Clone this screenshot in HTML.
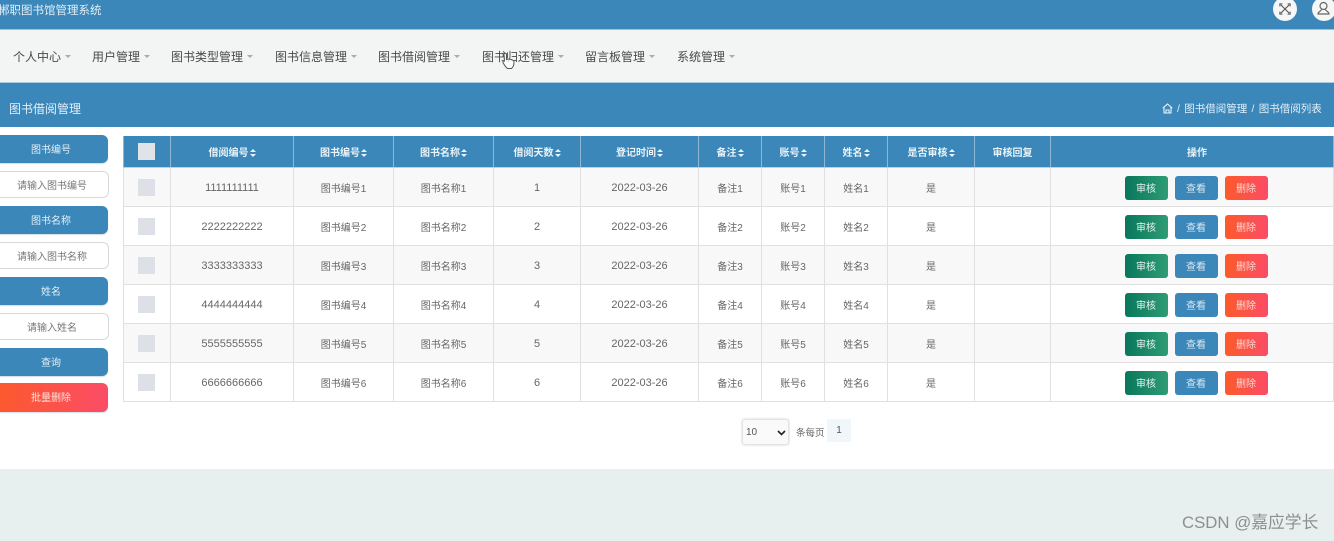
<!DOCTYPE html>
<html><head><meta charset="utf-8">
<style>
html,body{margin:0;padding:0;background:#fff}
#w{position:relative;width:1334px;height:541px;overflow:hidden;background:#fff;font-family:"Liberation Sans","Noto Sans CJK SC",sans-serif;filter:blur(.35px)}
.a{position:absolute}
.n{position:absolute;top:49px;font-size:12px;line-height:16px;color:#4a4a4a;white-space:nowrap}
.n i{display:inline-block;width:0;height:0;border:3.5px solid transparent;border-top:3.5px solid #aaa;border-bottom:0;margin-left:4px;vertical-align:3px}
.sb{position:absolute;left:-6px;width:114px;height:28px;background:#3b87ba;border-radius:6px;color:#e4eff6;font-size:10px;line-height:32px;text-align:center;box-shadow:0 1px 1px #d0dce4}
.si{position:absolute;left:-5px;width:112px;height:25px;background:#fff;border:1.5px solid #d8d8d8;border-radius:6px;color:#777;font-size:10px;line-height:29px;text-align:center}
table{position:absolute;left:123px;top:136px;width:1211px;border-collapse:collapse;table-layout:fixed;font-size:10px;color:#666}
th{height:31px;padding:0;background:#3b87ba;color:#e9f2f7;font-size:10px;font-weight:bold;border:1px solid #8db7d4;border-top:0;border-bottom:1px solid #ccc;white-space:nowrap}
td{height:38px;padding:0;text-align:center;border:1px solid #e0e0e0;white-space:nowrap}
td.num{font-size:11px;padding-top:2px;height:36px}
tr.g td{background:#f8f8f8}
td.op{padding-left:8px}
th.op{padding-left:10px}
.s{display:inline-block;position:relative;width:6px;height:8px;margin-left:1px;vertical-align:-1px}
.s:before,.s:after{content:"";position:absolute;left:0;width:0;height:0;border-left:3px solid transparent;border-right:3px solid transparent}
.s:before{top:0;border-bottom:3.5px solid #e9f2f7}
.s:after{bottom:0;border-top:3.5px solid #e9f2f7}
.c{display:block;width:17px;height:17px;background:#dde1e7;margin:0 auto;position:relative;left:-1px}
th .c{background:#e0e4e8}
.b{display:inline-block;width:43px;height:24px;line-height:27px;border-radius:3px;color:#e8f2f0;font-size:10px;margin:2px 3.5px 0;vertical-align:middle;text-align:center}
.b1{background:linear-gradient(90deg,#08775c,#2f9c74)}
.b2{background:#3b87ba;color:#dce9f2}
.b3{background:linear-gradient(90deg,#fd5a2b,#fb4c67);color:#f8d8d0}
</style></head><body>
<div id="w">
<div class="a" style="left:0;top:0;width:1334px;height:29px;background:#3b87ba;border-bottom:1px solid #9cc2da"></div>
<div class="a" style="left:-2px;top:4px;font-size:11.5px;line-height:15px;color:#e2eef5;white-space:nowrap">郴职图书馆管理系统</div>
<div class="a" style="left:1273px;top:-3px;width:24px;height:24px;border-radius:50%;background:#f6f6f6"></div>
<svg class="a" style="left:1279px;top:3px" width="12" height="12" viewBox="0 0 14 14" fill="none" stroke="#555" stroke-width="1.3"><path d="M2 2L12 12M12 2L2 12"/><path d="M1 4V1H4M10 1H13V4M13 10V13H10M4 13H1V10" stroke-width="1.2"/></svg>
<div class="a" style="left:1312px;top:-3px;width:24px;height:24px;border-radius:50%;background:#f6f6f6"></div>
<svg class="a" style="left:1316px;top:1px" width="15" height="15" viewBox="0 0 15 15" fill="none" stroke="#666" stroke-width="1.2"><circle cx="7.5" cy="5" r="3.5"/><path d="M5.5 8.5C5 10.5 2 10.5 2 13H13C13 10.5 10 10.5 9.5 8.5"/></svg>
<div class="a" style="left:0;top:30px;width:1334px;height:52px;background:#f3f4f4"></div>
<div class="n" style="left:13px">个人中心<i></i></div>
<div class="n" style="left:92px">用户管理<i></i></div>
<div class="n" style="left:171px">图书类型管理<i></i></div>
<div class="n" style="left:275px">图书信息管理<i></i></div>
<div class="n" style="left:378px">图书借阅管理<i></i></div>
<div class="n" style="left:482px">图书归还管理<i></i></div>
<div class="n" style="left:585px">留言板管理<i></i></div>
<div class="n" style="left:677px">系统管理<i></i></div>
<svg class="a" style="left:501px;top:52px" width="15" height="18" viewBox="0 0 15 18" fill="#fff" fill-opacity=".75" stroke="#555" stroke-width="1"><path d="M3 2.5C3 .8 5.5 .8 5.5 2.5V7.5C8 6.5 13 7.5 13 10C13 13 12.5 15 10.5 16.5H6.5C4.5 15 3 12.5 2 10.5C1.5 9 3 8.5 3.5 9.5Z"/></svg>
<div class="a" style="left:0;top:82px;width:1334px;height:45px;background:#3b87ba;border-top:1px solid #a8c9de;box-sizing:border-box"></div>
<div class="a" style="left:9px;top:101px;font-size:12px;line-height:16px;color:#e4eff6;white-space:nowrap">图书借阅管理</div>
<svg class="a" style="left:1162px;top:103px" width="11" height="11" viewBox="0 0 11 11" fill="none" stroke="#e8f1f7" stroke-width="1.1"><path d="M.8 5.2L5.5 1L10.2 5.2M2 4.5V10H9V4.5M4 10V7H7V10"/></svg>
<div class="a" style="left:1177px;top:102px;font-size:10.5px;line-height:15px;word-spacing:1.4px;color:#e4eff6;white-space:nowrap">/ 图书借阅管理 / 图书借阅列表</div>

<div class="sb" style="top:135px">图书编号</div>
<div class="si" style="top:171px">请输入图书编号</div>
<div class="sb" style="top:206px">图书名称</div>
<div class="si" style="top:242px">请输入图书名称</div>
<div class="sb" style="top:277px">姓名</div>
<div class="si" style="top:313px">请输入姓名</div>
<div class="sb" style="top:348px">查询</div>
<div class="sb" style="top:383px;height:29px;line-height:32px;background:linear-gradient(90deg,#fd5a2b,#fb4c67);color:#fbe3dc">批量删除</div>

<table>
<colgroup><col style="width:47px"><col style="width:123px"><col style="width:100px"><col style="width:100px"><col style="width:87px"><col style="width:118px"><col style="width:63px"><col style="width:63px"><col style="width:63px"><col style="width:87px"><col style="width:76px"><col></colgroup>
<tr><th><span class="c"></span></th><th>借阅编号<span class="s"></span></th><th>图书编号<span class="s"></span></th><th>图书名称<span class="s"></span></th><th>借阅天数<span class="s"></span></th><th>登记时间<span class="s"></span></th><th>备注<span class="s"></span></th><th>账号<span class="s"></span></th><th>姓名<span class="s"></span></th><th>是否审核<span class="s"></span></th><th>审核回复</th><th class="op">操作</th></tr>
<tr class="g"><td><span class="c"></span></td><td class="num">1111111111</td><td>图书编号1</td><td>图书名称1</td><td class="num">1</td><td class="num">2022-03-26</td><td>备注1</td><td>账号1</td><td>姓名1</td><td>是</td><td></td><td class="op"><span class="b b1">审核</span><span class="b b2">查看</span><span class="b b3">删除</span></td></tr>
<tr><td><span class="c"></span></td><td class="num">2222222222</td><td>图书编号2</td><td>图书名称2</td><td class="num">2</td><td class="num">2022-03-26</td><td>备注2</td><td>账号2</td><td>姓名2</td><td>是</td><td></td><td class="op"><span class="b b1">审核</span><span class="b b2">查看</span><span class="b b3">删除</span></td></tr>
<tr class="g"><td><span class="c"></span></td><td class="num">3333333333</td><td>图书编号3</td><td>图书名称3</td><td class="num">3</td><td class="num">2022-03-26</td><td>备注3</td><td>账号3</td><td>姓名3</td><td>是</td><td></td><td class="op"><span class="b b1">审核</span><span class="b b2">查看</span><span class="b b3">删除</span></td></tr>
<tr><td><span class="c"></span></td><td class="num">4444444444</td><td>图书编号4</td><td>图书名称4</td><td class="num">4</td><td class="num">2022-03-26</td><td>备注4</td><td>账号4</td><td>姓名4</td><td>是</td><td></td><td class="op"><span class="b b1">审核</span><span class="b b2">查看</span><span class="b b3">删除</span></td></tr>
<tr class="g"><td><span class="c"></span></td><td class="num">5555555555</td><td>图书编号5</td><td>图书名称5</td><td class="num">5</td><td class="num">2022-03-26</td><td>备注5</td><td>账号5</td><td>姓名5</td><td>是</td><td></td><td class="op"><span class="b b1">审核</span><span class="b b2">查看</span><span class="b b3">删除</span></td></tr>
<tr><td><span class="c"></span></td><td class="num">6666666666</td><td>图书编号6</td><td>图书名称6</td><td class="num">6</td><td class="num">2022-03-26</td><td>备注6</td><td>账号6</td><td>姓名6</td><td>是</td><td></td><td class="op"><span class="b b1">审核</span><span class="b b2">查看</span><span class="b b3">删除</span></td></tr>
</table>

<div class="a" style="left:742px;top:419px;width:47px;height:26px;box-sizing:border-box;background:#fafafa;border:1px solid #e4e4e4;border-radius:3px;box-shadow:0 0 2px #ccc;font-size:10px;line-height:26px;color:#555;padding-left:3px">10</div>
<svg class="a" style="left:777px;top:430px" width="9" height="6" viewBox="0 0 9 6" fill="none" stroke="#222" stroke-width="1.6"><path d="M1 1L4.5 4.5L8 1"/></svg>
<div class="a" style="left:796px;top:427px;font-size:9.5px;line-height:14px;color:#666;white-space:nowrap">条每页</div>
<div class="a" style="left:827px;top:419px;width:24px;height:23px;background:#f1f6fb;font-size:10px;line-height:23px;text-align:center;color:#555">1</div>
<div class="a" style="left:0;top:469px;width:1334px;height:72px;background:#e8f0ef"></div>
<div class="a" style="left:1182px;top:513px;font-size:16.8px;line-height:20px;color:#8a8f8f;white-space:nowrap">CSDN @嘉应学长</div>
</div>
</body></html>
